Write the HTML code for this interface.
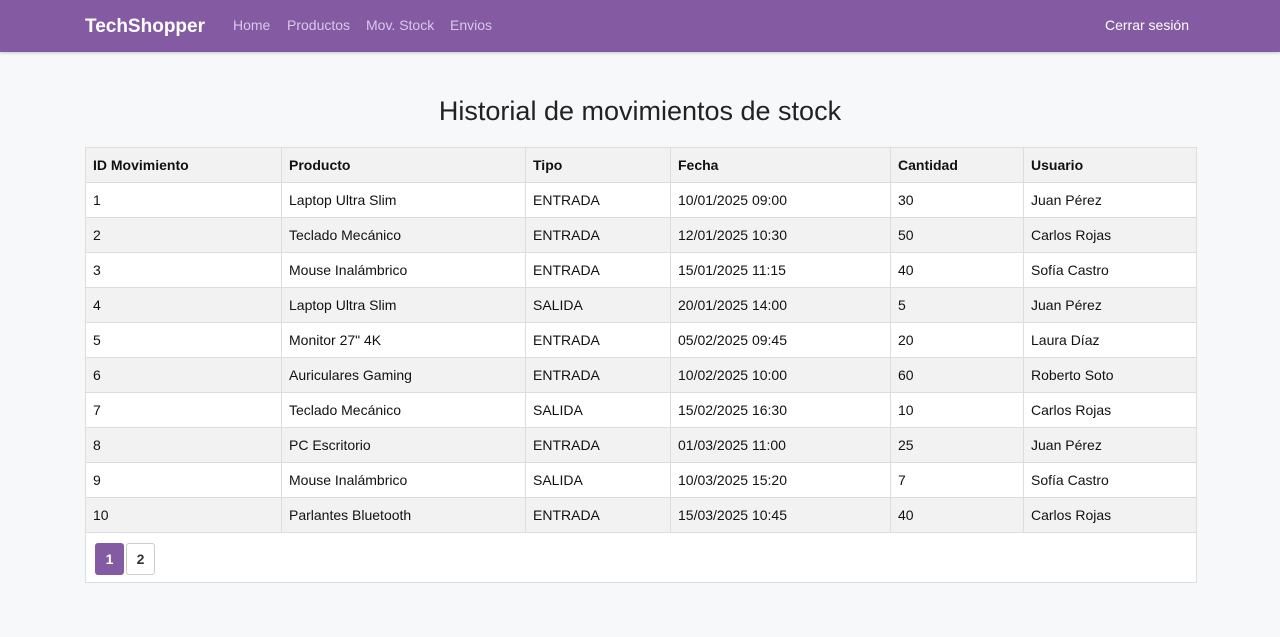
<!DOCTYPE html><html><head><style>
body{margin:0;background:#f7f8fa;font-family:"Liberation Sans",sans-serif;width:1280px;height:637px;overflow:hidden}
nav{height:52px;background:#845ba3;position:relative;box-shadow:0 1px 3px rgba(0,0,0,.2)}
.brand{position:absolute;left:85px;top:16px;color:#fff;font-weight:bold;font-size:19px}
.links a{position:absolute;top:17px;color:#d9c8e8;font-size:14px;text-decoration:none}
.out{position:absolute;right:91px;top:17px;color:#fff;font-size:14px}
h1{position:absolute;top:96px;left:0;width:1280px;text-align:center;margin:0;font-weight:normal;font-size:27px;color:#222}
.wrap{position:absolute;left:85px;top:147px;width:1110px;height:434px;background:#fff;border:1px solid #ddd}
table{border-collapse:collapse;width:1111px;margin:-1px 0 0 -1px;table-layout:fixed}
td,th{height:34px;border:1px solid #ddd;padding:0 7px;font-size:14px;text-align:left;color:#111}
th{background:#f2f2f2;font-weight:bold}
tr:nth-child(odd) td{background:#f2f2f2}
.pg{position:absolute;left:9px;top:395px}
.pg span{display:inline-block;width:27px;height:30px;line-height:30px;text-align:center;border:1px solid #ccc;border-radius:3px;font-size:14px;font-weight:bold;margin-right:2px;color:#333;background:#fff}
.pg span.a{background:#845ba3;color:#fff;border-color:#845ba3}
</style></head><body>
<nav><div class="brand">TechShopper</div><div class="links"><a style="left:233px">Home</a><a style="left:287px">Productos</a><a style="left:366px">Mov. Stock</a><a style="left:450px">Envios</a></div><div class="out">Cerrar sesión</div></nav>
<h1>Historial de movimientos de stock</h1>
<div class="wrap"><table>
<colgroup><col style="width:196px"><col style="width:244px"><col style="width:145px"><col style="width:220px"><col style="width:133px"><col style="width:173px"></colgroup>
<tr><th>ID Movimiento</th><th>Producto</th><th>Tipo</th><th>Fecha</th><th>Cantidad</th><th>Usuario</th></tr>
<tr><td>1</td><td>Laptop Ultra Slim</td><td>ENTRADA</td><td>10/01/2025 09:00</td><td>30</td><td>Juan Pérez</td></tr>
<tr><td>2</td><td>Teclado Mecánico</td><td>ENTRADA</td><td>12/01/2025 10:30</td><td>50</td><td>Carlos Rojas</td></tr>
<tr><td>3</td><td>Mouse Inalámbrico</td><td>ENTRADA</td><td>15/01/2025 11:15</td><td>40</td><td>Sofía Castro</td></tr>
<tr><td>4</td><td>Laptop Ultra Slim</td><td>SALIDA</td><td>20/01/2025 14:00</td><td>5</td><td>Juan Pérez</td></tr>
<tr><td>5</td><td>Monitor 27" 4K</td><td>ENTRADA</td><td>05/02/2025 09:45</td><td>20</td><td>Laura Díaz</td></tr>
<tr><td>6</td><td>Auriculares Gaming</td><td>ENTRADA</td><td>10/02/2025 10:00</td><td>60</td><td>Roberto Soto</td></tr>
<tr><td>7</td><td>Teclado Mecánico</td><td>SALIDA</td><td>15/02/2025 16:30</td><td>10</td><td>Carlos Rojas</td></tr>
<tr><td>8</td><td>PC Escritorio</td><td>ENTRADA</td><td>01/03/2025 11:00</td><td>25</td><td>Juan Pérez</td></tr>
<tr><td>9</td><td>Mouse Inalámbrico</td><td>SALIDA</td><td>10/03/2025 15:20</td><td>7</td><td>Sofía Castro</td></tr>
<tr><td>10</td><td>Parlantes Bluetooth</td><td>ENTRADA</td><td>15/03/2025 10:45</td><td>40</td><td>Carlos Rojas</td></tr>
</table>
<div class="pg"><span class="a">1</span><span>2</span></div></div>
</body></html>
